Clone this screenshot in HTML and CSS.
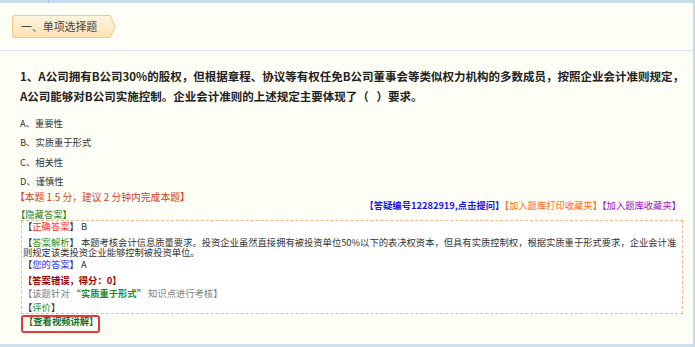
FILE: index.html
```html
<!DOCTYPE html>
<html lang="zh-CN">
<head>
<meta charset="utf-8">
<title>单项选择题</title>
<link rel="stylesheet" href="styles.css">
</head>
<body>
<div class="frame">
  <div class="topbar"></div>
  <div class="head">
    <div class="tab">
      <div class="tab-body">一、单项选择题</div>
      <svg class="tab-arrow" width="6" height="23" viewBox="0 0 6 23">
        <defs>
          <linearGradient id="tg" x1="0" y1="0" x2="0" y2="1">
            <stop offset="0" stop-color="#fff4de"/>
            <stop offset="1" stop-color="#fde2b6"/>
          </linearGradient>
        </defs>
        <polygon points="0,0 0.5,0.5 5.5,11.5 0.5,22.5 0,23" fill="url(#tg)"/>
        <path d="M0 0.5 L5.5 11.5 L0 22.5" fill="none" stroke="#f0c68c" stroke-width="1"/>
      </svg>
    </div>
  </div>

  <div class="question">1、A公司拥有B公司30%的股权，但根据章程、协议等有权任免B公司董事会等类似权力机构的多数成员，按照企业会计准则规定，<br>A公司能够对B公司实施控制。企业会计准则的上述规定主要体现了（&nbsp;&nbsp;&nbsp;）要求。</div>

  <div class="options">
    <div class="opt">A、重要性</div>
    <div class="opt">B、实质重于形式</div>
    <div class="opt">C、相关性</div>
    <div class="opt">D、谨慎性</div>
  </div>

  <div class="score">【本题 1.5 分，建议 2 分钟内完成本题】</div>
  <div class="links"><span class="l-blue">【答疑编号12282919,点击提问】</span><span class="l-orange">【加入题库打印收藏夹】</span><span class="l-purple">【加入题库收藏夹】</span></div>
  <div class="hide">【隐藏答案】</div>

  <div class="answer">
    <p class="row r1">【<span class="c-red">正确答案</span>】 B</p>
    <p class="row r2">【<span class="c-green">答案解析</span>】 本题考核会计信息质量要求。投资企业虽然直接拥有被投资单位50%以下的表决权资本，但具有实质控制权，根据实质重于形式要求，企业会计准则规定该类投资企业能够控制被投资单位。</p>
    <p class="row r3">【<span class="c-blue">您的答案</span>】 A</p>
    <p class="row r4 wrong">【答案错误，得分：0】</p>
    <p class="row r5 note">【该题针对 <b class="c-green">“实质重于形式”</b> 知识点进行考核】</p>
    <p class="row r6">【<span class="c-green">评价</span>】</p>
  </div>

  <div class="video">【查看视频讲解】</div>
</div>
</body>
</html>
```

FILE: styles.css
```css
html, body {
  margin: 0;
  padding: 0;
}
body {
  background: #fffef6;
  font-family: "Noto Sans CJK SC", "Noto Sans", sans-serif;
  color: #333;
}
.frame {
  width: 695px;
  height: 347px;
  box-sizing: border-box;
  border-right: 2px solid #c9d9ea;
  border-bottom: 3px solid #d0dfee;
  overflow: hidden;
}
.topbar {
  height: 3px;
  background: linear-gradient(to right, #c8dbef 48px, #a8c2dd 48px, #a8c2dd 49px, #c8dbef 49px);
}
.head {
  height: 48px;
  box-sizing: border-box;
  padding: 12px 0 0 12px;
  border-bottom: 1px solid #d6e2ea;
}
.tab {
  display: flex;
  height: 23px;
}
.tab-body {
  box-sizing: border-box;
  height: 23px;
  line-height: 21px;
  padding: 0 13px 0 8px;
  font-size: 10.9px;
  color: #444;
  background: linear-gradient(#fff4de, #fde2b6);
  border: 1px solid #f0c68c;
  border-right: none;
  border-radius: 3px 0 0 3px;
}
.tab-arrow {
  display: block;
}
.question {
  padding: 15px 4px 0 20px;
  font-size: 11.5px;
  line-height: 20px;
  font-weight: bold;
  color: #222;
  white-space: nowrap;
}
.options {
  margin-top: 8px;
  padding-left: 20px;
  font-size: 9.3px;
  line-height: 19.3px;
}
.score {
  margin-top: 2px;
  padding-left: 15px;
  font-size: 9.8px;
  line-height: 9px;
  color: #d23e1a;
}
.links {
  margin-top: -1px;
  text-align: right;
  padding-right: 12px;
  font-size: 9.3px;
  line-height: 9px;
}
.l-blue { color: #1515f0; font-weight: bold; }
.l-orange { color: #ff6a10; }
.l-purple { color: #9a14cc; }
.hide {
  margin-top: -1px;
  padding-left: 16px;
  font-size: 9.3px;
  line-height: 10px;
  color: #1f7a1f;
}
.answer {
  margin: 1px 10px 0 21px;
  padding: 0 2px 1px 1px;
  border: 1px dashed #f5b68a;
  background: #fff;
  font-size: 9.3px;
  color: #333;
}
.row {
  margin: 0;
  line-height: 10px;
}
.r2 { margin-top: 6px; }
.r3 { margin-top: 2px; }
.r4 { margin-top: 6px; }
.r5 { margin-top: 3px; }
.r6 { margin-top: 4px; }
.c-red { color: #ff1f1f; }
.c-green { color: #228a22; }
.c-blue { color: #2424ff; }
.wrong {
  color: #a00000;
  font-weight: bold;
}
.note { color: #808080; }
.note b { font-weight: bold; }
.video {
  display: block;
  box-sizing: border-box;
  margin: 1px 0 0 21px;
  width: 79px;
  height: 18px;
  padding: 0 0 0 1px;
  border: 2px solid #e23a3c;
  border-radius: 3px;
  font-size: 9.3px;
  line-height: 9px;
  font-weight: bold;
  color: #1a6e1a;
  white-space: nowrap;
}
```
